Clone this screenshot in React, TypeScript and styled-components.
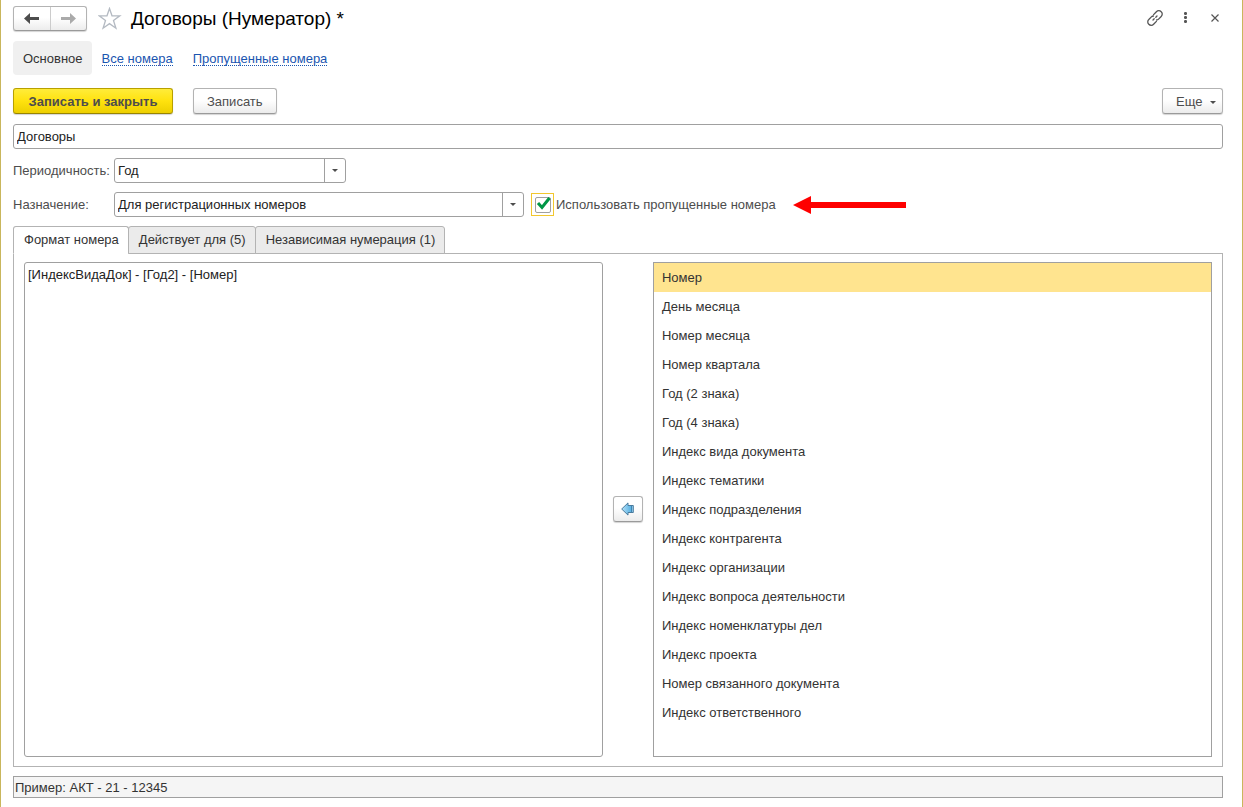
import React, { useState } from "react";
import styled, { createGlobalStyle, css } from "styled-components";

const GlobalStyle = createGlobalStyle`
  *, *::before, *::after { box-sizing: border-box; }
  body {
    margin: 0;
    background: #fff;
  }
  body, button, input, select, textarea {
    font-family: "Liberation Sans", Arial, sans-serif;
    font-size: 13px;
    line-height: 16px;
    color: #333;
  }
`;

const Window = styled.main`
  display: flex;
  flex-direction: column;
  min-height: 100vh;
  padding: 6px 19px 9px 12px;
  border: solid #c9b65c;
  border-width: 0 1px;
`;

const TitleBar = styled.header`
  display: flex;
  align-items: center;
  height: 25px;
`;

const raised = css`
  border: 1px solid #b3b3b3;
  border-bottom-color: #9a9a9a;
  border-radius: 3px;
  background: linear-gradient(#fff 45%, #ececec);
  box-shadow: 0 1px 1px #d4d4d4;
`;

const History = styled.nav`
  ${raised}
  display: flex;
  width: 74px;
  height: 25px;
`;

const HistoryButton = styled.button`
  flex: 1;
  display: flex;
  align-items: center;
  justify-content: center;
  padding: 0;
  border: 0;
  background: none;
  color: #4d4d4d;

  & + & { border-left: 1px solid #ccc; }
  &:disabled { color: #aaa; }
`;

const IconButton = styled.button`
  display: flex;
  align-items: center;
  justify-content: center;
  width: 24px;
  height: 24px;
  padding: 0;
  border: 0;
  background: none;
  color: #555;
`;

const StarButton = styled(IconButton)`
  margin: 0 9px 0 11px;
  color: #b4bac2;
`;

const Title = styled.h1`
  flex: 1;
  margin: 0;
  font-size: 19px;
  line-height: 24px;
  font-weight: 400;
  color: #000;
`;

const WindowTools = styled.div`
  display: flex;
  gap: 6px;
  margin-right: -4px;
  padding-bottom: 2px;
`;

const Sections = styled.nav`
  display: flex;
  align-items: center;
  gap: 20px;
  height: 34px;
  margin-top: 10px;
`;

const CurrentSection = styled.span`
  margin-right: -10px;
  padding: 10px 9px 8px 10px;
  border-radius: 4px;
  background: #f0f0f0;
`;

const SectionLink = styled.a`
  padding-top: 2px;
  line-height: 12px;
  border-bottom: 1px dotted #1a55b0;
  color: #1a55b0;
  text-decoration: none;
`;

const Commands = styled.div`
  display: flex;
  gap: 20px;
  margin-top: 13px;
`;

const CommandButton = styled.button<{ $primary?: boolean }>`
  ${raised}
  height: 26px;
  padding: 2px 13px 0;
  color: #4d4d4d;
  ${(p) =>
    p.$primary &&
    css`
      min-width: 160px;
      border-color: #b8a000;
      border-bottom-color: #988400;
      background: linear-gradient(#ffec3a, #ffe20e 50%, #edcf00);
      font-weight: 700;
    `}
`;

const MoreButton = styled(CommandButton)`
  display: flex;
  align-items: center;
  justify-content: space-between;
  width: 61px;
  margin-left: auto;
  padding-right: 6px;
`;

const TextField = styled.input`
  width: 100%;
  height: 25px;
  margin-top: 10px;
  padding: 0 3px;
  border: 1px solid #a0a0a0;
  border-radius: 3px;
  background: #fff;
  color: #222;
`;

const FieldRow = styled.div`
  display: flex;
  align-items: center;
  height: 25px;
  margin-top: 9px;
`;

const Label = styled.label`
  width: 101px;
  color: #4d4d4d;
  white-space: nowrap;
`;

const SelectBox = styled.div<{ $width: number }>`
  position: relative;
  width: ${(p) => p.$width}px;
  height: 25px;

  select {
    width: 100%;
    height: 100%;
    padding: 0 24px 0 3px;
    border: 1px solid #a0a0a0;
    border-radius: 3px;
    background: #fff;
    color: #222;
    appearance: none;
  }
`;

const DropMark = styled.span`
  position: absolute;
  top: 1px;
  right: 1px;
  bottom: 1px;
  display: flex;
  align-items: center;
  justify-content: center;
  width: 21px;
  border-left: 1px solid #a0a0a0;
  color: #4d4d4d;
  pointer-events: none;
`;

const CheckFrame = styled.span`
  position: relative;
  display: flex;
  align-items: center;
  justify-content: center;
  width: 23px;
  height: 23px;
  margin: 0 2px 0 7px;
  border: 1px solid #f2c72e;

  input {
    width: 16px;
    height: 16px;
    margin: 0;
    border: 1px solid #a0a0a0;
    border-radius: 2px;
    background: #fff;
    appearance: none;
  }
  svg {
    position: absolute;
    top: 3px;
    left: 4px;
    pointer-events: none;
  }
  input:not(:checked) + svg { display: none; }
`;

const CheckLabel = styled.label`
  color: #4d4d4d;
`;

const Pointer = styled.svg`
  margin-left: 17px;
`;

const TabList = styled.div`
  display: flex;
  margin-top: 9px;
`;

const Tab = styled.button<{ $active: boolean }>`
  position: relative;
  height: 28px;
  margin-bottom: -1px;
  padding: 0 9px 0 10px;
  border: 1px solid #b3b3b3;
  border-radius: 3px 3px 0 0;
  background: #ebebeb;

  & + & { margin-left: -1px; }
  ${(p) =>
    p.$active &&
    css`
      border-bottom-color: #fff;
      background: #fff;
    `}
`;

const Panel = styled.section`
  flex: 1;
  display: grid;
  grid-template-columns: 29fr 30px 28fr;
  gap: 10px;
  padding: 8px 10px 9px;
  border: 1px solid #b3b3b3;
`;

const FormatEditor = styled.textarea`
  min-width: 0;
  padding: 4px 3px;
  border: 1px solid #a0a0a0;
  border-radius: 3px;
  color: #222;
  resize: none;
`;

const InsertButton = styled.button`
  ${raised}
  align-self: center;
  display: flex;
  align-items: center;
  justify-content: center;
  height: 26px;
  margin-bottom: 2px;
  padding: 0;
`;

const Parts = styled.ul`
  min-width: 0;
  min-height: 495px;
  margin: 0;
  padding: 0;
  border: 1px solid #a0a0a0;
  list-style: none;
`;

const Part = styled.li<{ $selected: boolean }>`
  height: 29px;
  padding: 0 8px;
  line-height: 29px;
  background: ${(p) => (p.$selected ? "#ffe48f" : "transparent")};
  cursor: default;
`;

const Example = styled(TextField)`
  height: 22px;
  margin-top: 9px;
  padding: 0 1px;
  border-radius: 0;
  background: #f5f5f5;
  color: #333;
`;

const ArrowIcon = ({ flip }: { flip?: boolean }) => (
  <svg width="15" height="11" viewBox="0 0 15 11" aria-hidden="true">
    <path
      d={flip ? "M0 4h9V0l6 5.500-6 5.500V7H0z" : "M15 4H6V0L0 5.500l6 5.500V7h9z"}
      fill="currentColor"
    />
  </svg>
);

const Caret = () => (
  <svg width="6" height="3" viewBox="0 0 6 3" aria-hidden="true">
    <path d="M0 0h6L3 3z" fill="currentColor" />
  </svg>
);

const parts = [
  "Номер",
  "День месяца",
  "Номер месяца",
  "Номер квартала",
  "Год (2 знака)",
  "Год (4 знака)",
  "Индекс вида документа",
  "Индекс тематики",
  "Индекс подразделения",
  "Индекс контрагента",
  "Индекс организации",
  "Индекс вопроса деятельности",
  "Индекс номенклатуры дел",
  "Индекс проекта",
  "Номер связанного документа",
  "Индекс ответственного",
];

const tabs = ["Формат номера", "Действует для (5)", "Независимая нумерация (1)"];

export default function App() {
  const [tab, setTab] = useState(0);
  const [part, setPart] = useState(0);

  return (
    <>
      <GlobalStyle />
      <Window>
        <TitleBar>
          <History>
            <HistoryButton aria-label="Назад"><ArrowIcon /></HistoryButton>
            <HistoryButton aria-label="Вперед" disabled><ArrowIcon flip /></HistoryButton>
          </History>
          <StarButton aria-label="В избранное">
            <svg width="24" height="24" viewBox="0 0 24 24" fill="none" stroke="currentColor" strokeWidth="1.300">
              <path d="M11.500 1.500l2.500 7.300h7.800l-6.300 4.700 2.400 7.700-6.400-4.600-6.400 4.600 2.400-7.700L1.200 8.800H9z" />
            </svg>
          </StarButton>
          <Title>Договоры (Нумератор) *</Title>
          <WindowTools>
            <IconButton aria-label="Ссылка">
              <svg width="16" height="16" viewBox="0 0 16 16" fill="none" stroke="currentColor" strokeWidth="1.300" strokeLinecap="round">
                <path d="M6.600 4.600l2.800-2.900a3.300 3.300 0 0 1 4.800 0a3.300 3.300 0 0 1 0 4.800l-2.600 2.600a3.200 3.200 0 0 1-2 .9" />
                <path d="M9.400 11.400l-2.800 2.900a3.300 3.300 0 0 1-4.800 0a3.300 3.300 0 0 1 0-4.800l2.600-2.600a3.200 3.200 0 0 1 2-.9" />
                <path d="M6 10l1.200-1.200M8.800 7.200L10 6" />
              </svg>
            </IconButton>
            <IconButton aria-label="Меню">
              <svg width="4" height="12" viewBox="0 0 4 12" fill="currentColor">
                <rect x="1" y="0" width="3" height="3" rx="1.200" />
                <rect x="1" y="4" width="3" height="3" rx="1.200" />
                <rect x="1" y="8" width="3" height="3" rx="1.200" />
              </svg>
            </IconButton>
            <IconButton aria-label="Закрыть">
              <svg width="8" height="8" viewBox="0 0 8 8" stroke="currentColor" strokeWidth="1.200">
                <path d="M0.500 0.500l7 7M7.500 0.500l-7 7" />
              </svg>
            </IconButton>
          </WindowTools>
        </TitleBar>

        <Sections>
          <CurrentSection aria-current="page">Основное</CurrentSection>
          <SectionLink href="#all">Все номера</SectionLink>
          <SectionLink href="#skipped">Пропущенные номера</SectionLink>
        </Sections>

        <Commands>
          <CommandButton $primary>Записать и закрыть</CommandButton>
          <CommandButton>Записать</CommandButton>
          <MoreButton>Еще <Caret /></MoreButton>
        </Commands>

        <TextField aria-label="Наименование" defaultValue="Договоры" />

        <FieldRow>
          <Label htmlFor="period">Периодичность:</Label>
          <SelectBox $width={232}>
            <select id="period"><option>Год</option></select>
            <DropMark><Caret /></DropMark>
          </SelectBox>
        </FieldRow>
        <FieldRow>
          <Label htmlFor="purpose">Назначение:</Label>
          <SelectBox $width={410}>
            <select id="purpose"><option>Для регистрационных номеров</option></select>
            <DropMark><Caret /></DropMark>
          </SelectBox>
          <CheckFrame>
            <input id="reuse" type="checkbox" defaultChecked />
            <svg width="15" height="14" viewBox="0 0 15 14" fill="none" stroke="#009646" strokeWidth="3">
              <path d="M2 6l4 4.500L13.500 1" />
            </svg>
          </CheckFrame>
          <CheckLabel htmlFor="reuse">Использовать пропущенные номера</CheckLabel>
          <Pointer width="113" height="18" viewBox="0 0 113 18" fill="#fe0000" aria-hidden="true">
            <path d="M0 9L18 0v6h95v6H18v6z" />
          </Pointer>
        </FieldRow>

        <TabList role="tablist">
          {tabs.map((name, i) => (
            <Tab key={name} role="tab" aria-selected={i === tab} $active={i === tab} onClick={() => setTab(i)}>
              {name}
            </Tab>
          ))}
        </TabList>
        <Panel role="tabpanel">
          <FormatEditor aria-label="Формат номера" defaultValue="[ИндексВидаДок] - [Год2] - [Номер]" />
          <InsertButton aria-label="Вставить">
            <svg width="13" height="14" viewBox="0 0 13 14">
              <defs>
                <linearGradient id="blue" x1="0" x2="1">
                  <stop offset="0" stopColor="#b5e2f8" />
                  <stop offset="0.750" stopColor="#5fb4e4" />
                  <stop offset="1" stopColor="#a9d9f3" />
                </linearGradient>
              </defs>
              <path d="M0.700 7L7 0.900V3.500h5.300v7H7v2.600z" fill="url(#blue)" stroke="#4a7b9d" />
              <path d="M10.500 4v6" stroke="#3f86b3" />
            </svg>
          </InsertButton>
          <Parts role="listbox" aria-label="Составные части номера">
            {parts.map((name, i) => (
              <Part key={name} role="option" aria-selected={i === part} $selected={i === part} onClick={() => setPart(i)}>
                {name}
              </Part>
            ))}
          </Parts>
        </Panel>

        <Example readOnly aria-label="Пример номера" value="Пример: АКТ - 21 - 12345" />
      </Window>
    </>
  );
}
